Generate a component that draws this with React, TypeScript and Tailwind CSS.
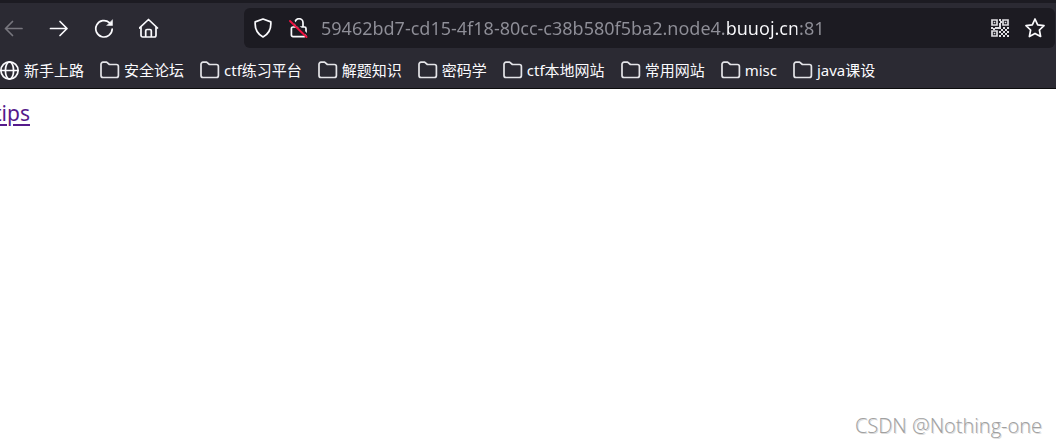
import type { ReactNode } from "react";

type IconProps = { children: ReactNode; className?: string };

function Icon({ children, className = "" }: IconProps) {
  return (
    <svg
      viewBox="0 0 20 20"
      className={`size-5 shrink-0 ${className}`}
      fill="none"
      stroke="currentColor"
      strokeWidth="1.7"
      strokeLinecap="round"
      strokeLinejoin="round"
      aria-hidden="true"
    >
      {children}
    </svg>
  );
}

const FolderIcon = () => (
  <Icon className="text-[#e4e4e8]">
    <path d="M1 4.2a2 2 0 0 1 2-2h3.6l2.8 2.3h7a2 2 0 0 1 2 2v9a2 2 0 0 1-2 2H3a2 2 0 0 1-2-2z" />
  </Icon>
);

const GlobeIcon = () => (
  <Icon>
    <circle cx="9.5" cy="10.5" r="8.6" />
    <ellipse cx="9.5" cy="10.5" rx="4.1" ry="8.6" />
    <path d="M1 10.5h17" />
  </Icon>
);

const qrCells = [
  [8, 0], [8, 4], [9, 2], [8, 6], [0, 8], [4, 8], [2, 9], [6, 8],
  [8, 8], [12, 8], [16, 8], [10, 10], [14, 10], [8, 12], [12, 12], [16, 12],
  [10, 14], [14, 14], [8, 16], [12, 16], [16, 16],
];

const QrIcon = () => (
  <Icon className="text-[#dedee2]">
    <g transform="translate(1 1)">
      <path
        d="M1 1h5v5H1zM12 1h5v5h-5zM1 12h5v5H1z"
        strokeWidth="1.7"
        strokeLinejoin="miter"
      />
      <path d="M2.7 2.7h1.6v1.6H2.7zM13.7 2.7h1.6v1.6h-1.6zM2.7 13.7h1.6v1.6H2.7z" fill="currentColor" stroke="none" />
      {qrCells.map(([x, y]) => (
        <rect key={`${x}-${y}`} x={x} y={y} width="2" height="2" fill="currentColor" stroke="none" />
      ))}
    </g>
  </Icon>
);

const folders = ["安全论坛", "ctf练习平台", "解题知识", "密码学", "ctf本地网站", "常用网站", "misc", "java课设"];

export default function App() {
  return (
    <div className="flex min-h-screen flex-col overflow-hidden bg-white font-['Noto_Sans','Noto_Sans_CJK_SC',sans-serif]">
      <header className="border-t-3 border-b border-t-[#1c1b22] border-b-[#0c0c0d] bg-[#2b2a33] text-[#fbfbfe]">
        <nav aria-label="Navigation" className="flex items-center pt-[5px] pr-px">
          <div className="flex w-61 shrink-0 items-center gap-[25px] pl-1">
            <button type="button" aria-label="Back" disabled className="text-[#77767e]">
              <Icon>
                <path d="M18 10.500H1.5M8.500 3.500 1.500 10.500l7 7" />
              </Icon>
            </button>
            <button type="button" aria-label="Forward">
              <Icon>
                <path d="M1.5 10.500H18M11 3.500l7 7-7 7" />
              </Icon>
            </button>
            <button type="button" aria-label="Reload">
              <Icon>
                <path d="M18.200 11a8.200 8.200 0 1 1-2.800-6.400" />
                <path d="M18.500 2v5.500H13z" fill="currentColor" strokeWidth="0.500" />
              </Icon>
            </button>
            <button type="button" aria-label="Home">
              <Icon>
                <path d="M.5 10 9.500 1.500l9 8.500M2 9v8.300A1.700 1.700 0 0 0 3.700 19h11.600a1.700 1.700 0 0 0 1.700-1.700V9M6.700 18.800v-6a1.300 1.300 0 0 1 1.300-1.300h3a1.300 1.300 0 0 1 1.300 1.300v6" />
              </Icon>
            </button>
          </div>
          <div className="flex h-10 min-w-0 flex-1 items-center rounded-md bg-[#1c1b22] pr-2.5 pl-[9px]">
            <button type="button" aria-label="Tracking protection">
              <Icon>
                <path d="M10 1 17.800 3.900q.8 10.500-7.800 15.100Q1.400 14.400 2.200 3.900z" />
              </Icon>
            </button>
            <button type="button" aria-label="Connection is not secure" className="ml-4">
              <Icon>
                <path d="M6 8V4.700a4 4 0 0 1 8 0V8.500M4 9h11.500a1.500 1.500 0 0 1 1.500 1.500V17a1.600 1.600 0 0 1-1.600 1.600H4A1.600 1.600 0 0 1 2.400 17v-6.500A1.500 1.500 0 0 1 4 9z" />
                <path d="m2.500 1.500 16.500 16" stroke="#1c1b22" strokeWidth="2" />
                <path d="m1 3 16.500 16" stroke="#f0103f" strokeWidth="1.900" />
              </Icon>
            </button>
            <input
              type="text"
              aria-label="Address"
              defaultValue="59462bd7-cd15-4f18-80cc-c38b580f5ba2.node4.buuoj.cn:81"
              className="ml-3 min-w-0 flex-1 bg-[linear-gradient(90deg,#8f8f98_405px,#fbfbfe_405px,#fbfbfe_476px,#8f8f98_476px)] bg-clip-text text-lg text-transparent caret-white outline-none"
            />
            <div className="flex gap-[15px]">
              <button type="button" aria-label="QR code">
                <QrIcon />
              </button>
              <button type="button" aria-label="Bookmark this page">
                <Icon>
                  <path d="m10 1 2.700 5.800 6.300.8-4.600 4.400 1.200 6.500L10 15.400l-5.600 3.100L5.600 12 1 7.600l6.300-.8z" />
                </Icon>
              </button>
            </div>
          </div>
        </nav>
        <nav aria-label="Bookmarks" className="flex h-10 items-center gap-4 pt-1 text-[15px] leading-5 whitespace-nowrap">
          <a href="#start" className="flex items-center gap-1">
            <GlobeIcon />
            新手上路
          </a>
          {folders.map((name) => (
            <button key={name} type="button" className="flex items-center gap-1">
              <FolderIcon />
              {name}
            </button>
          ))}
        </nav>
      </header>
      <main className="flex flex-1 flex-col items-start justify-between">
        <a href="#tips" className="mt-2 -ml-1.5 text-[21px] leading-8 text-[#551a8b] underline underline-offset-3">
          tips
        </a>
        <p className="mr-3.5 mb-1 self-end font-['Open_Sans','Noto_Sans',sans-serif] text-xl leading-8 font-light text-[#a0a0a0] [text-shadow:1px_1px_0_#dcdcdc]">
          CSDN @Nothing-one
        </p>
      </main>
    </div>
  );
}
